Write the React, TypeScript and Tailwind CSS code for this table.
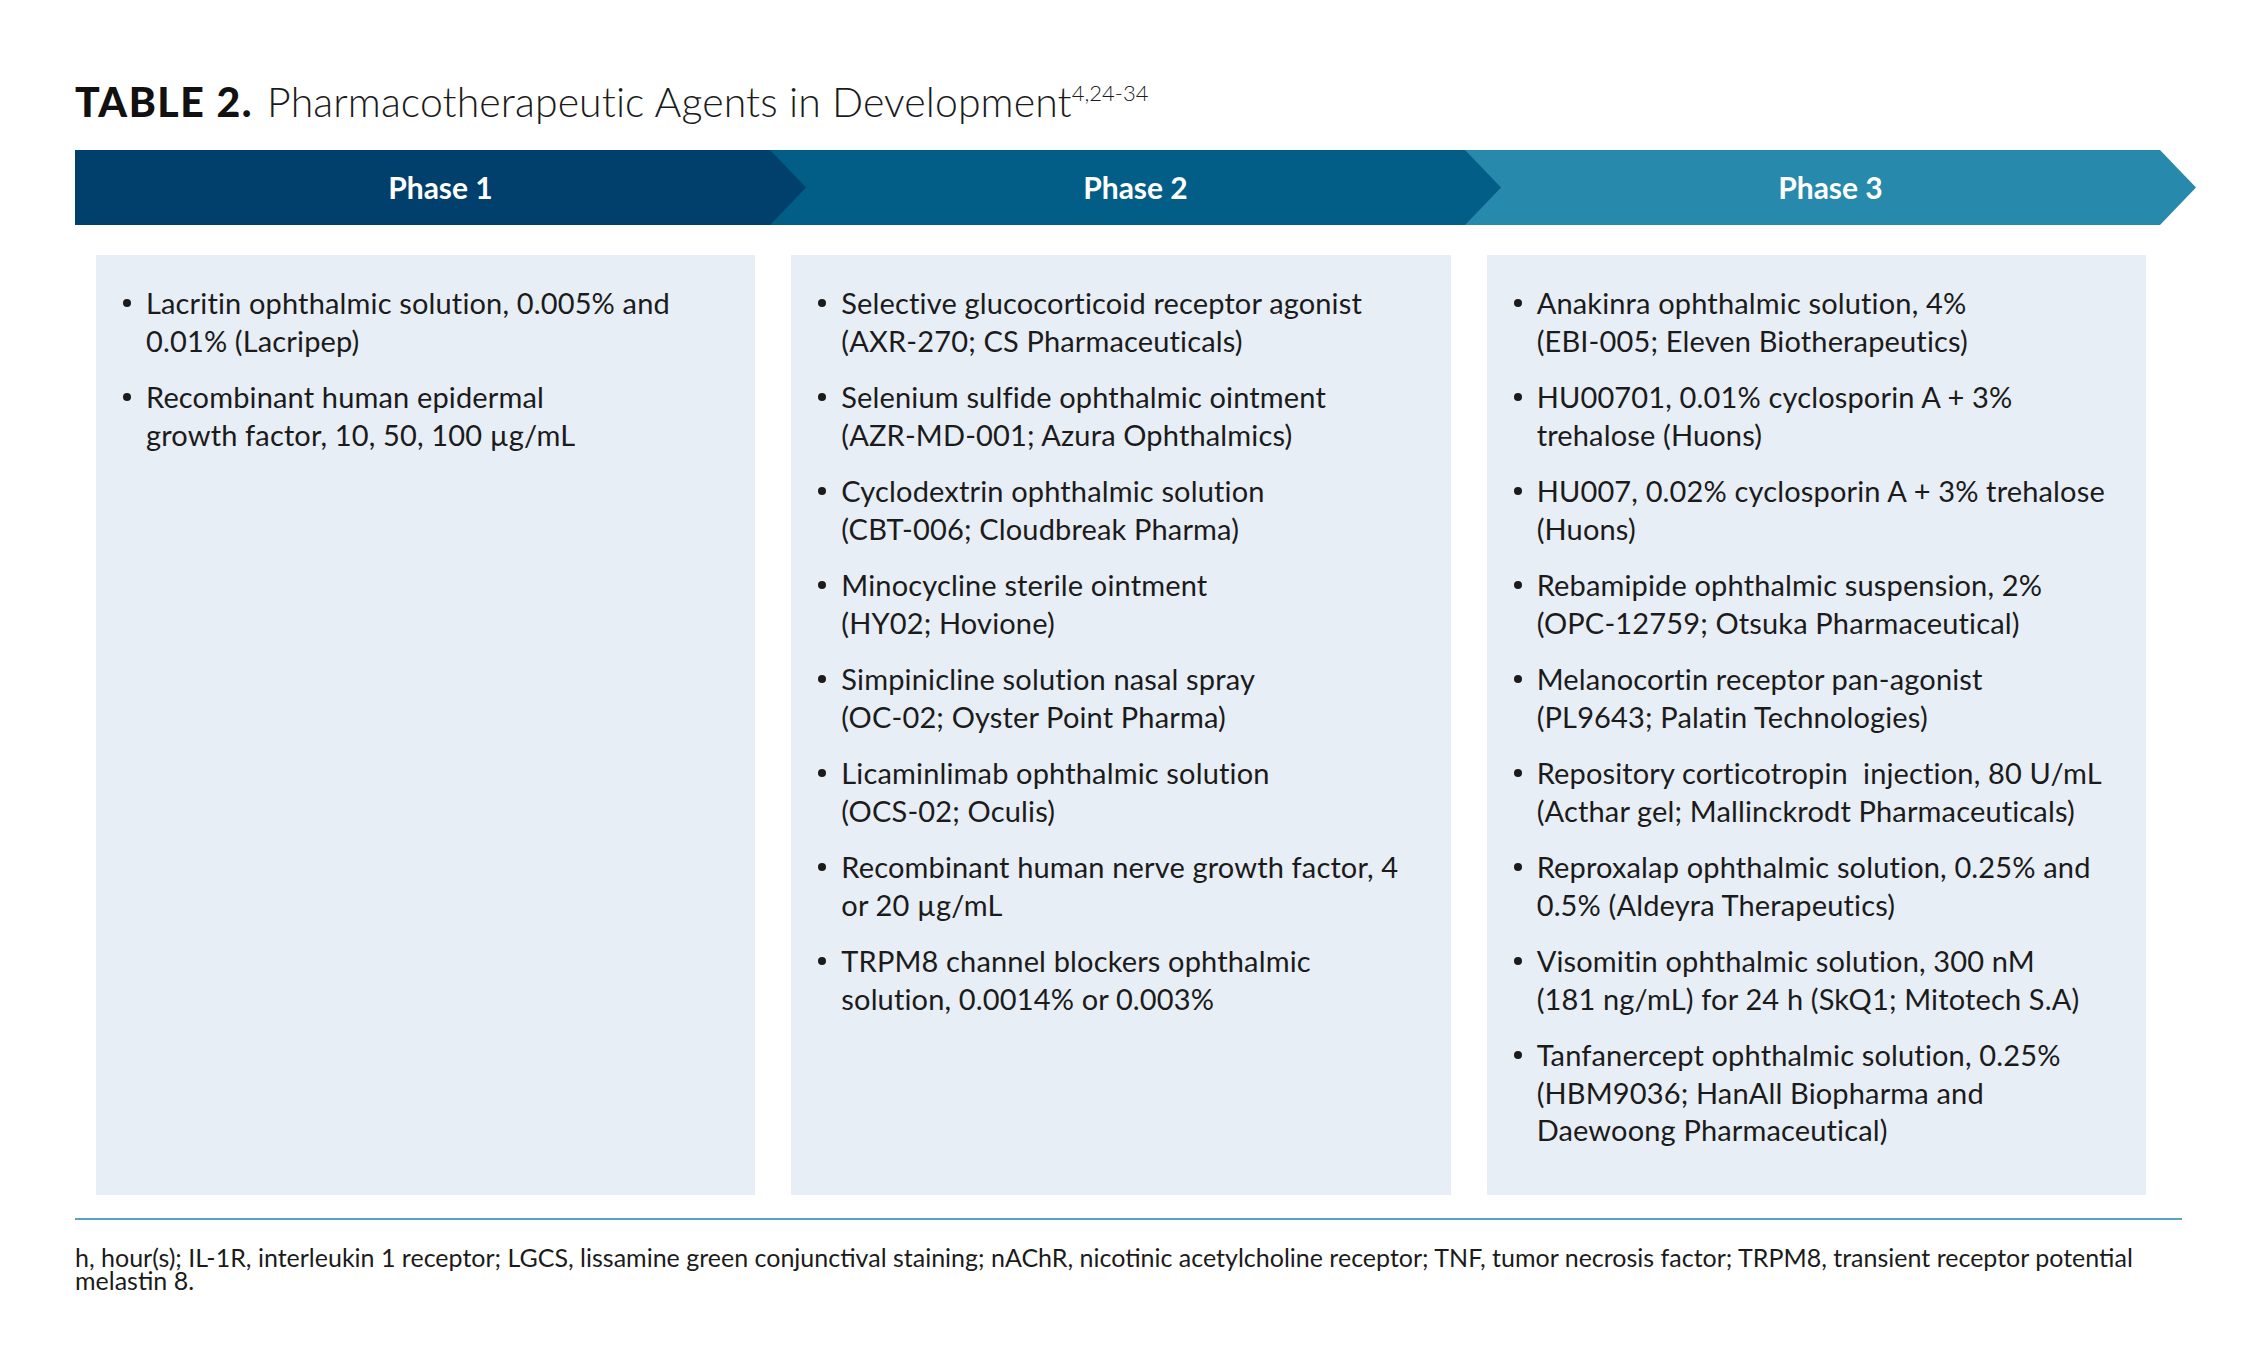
import React from 'react';

type Phase = {
  label: string;
  color: string;
  z: string;
  items: string[][];
};

const phases: Phase[] = [
  {
    label: 'Phase 1',
    color: 'bg-[#013f6d]',
    z: 'z-30',
    items: [
      ['Lacritin ophthalmic solution, 0.005% and', '0.01% (Lacripep)'],
      ['Recombinant human epidermal', 'growth factor, 10, 50, 100 µg/mL'],
    ],
  },
  {
    label: 'Phase 2',
    color: 'bg-[#025e87]',
    z: 'z-20',
    items: [
      ['Selective glucocorticoid receptor agonist', '(AXR-270; CS Pharmaceuticals)'],
      ['Selenium sulfide ophthalmic ointment', '(AZR-MD-001; Azura Ophthalmics)'],
      ['Cyclodextrin ophthalmic solution', '(CBT-006; Cloudbreak Pharma)'],
      ['Minocycline sterile ointment', '(HY02; Hovione)'],
      ['Simpinicline solution nasal spray', '(OC-02; Oyster Point Pharma)'],
      ['Licaminlimab ophthalmic solution', '(OCS-02; Oculis)'],
      ['Recombinant human nerve growth factor, 4', 'or 20 µg/mL'],
      ['TRPM8 channel blockers ophthalmic', 'solution, 0.0014% or 0.003%'],
    ],
  },
  {
    label: 'Phase 3',
    color: 'bg-[#2789ab]',
    z: 'z-10',
    items: [
      ['Anakinra ophthalmic solution, 4%', '(EBI-005; Eleven Biotherapeutics)'],
      ['HU00701, 0.01% cyclosporin A + 3%', 'trehalose (Huons)'],
      ['HU007, 0.02% cyclosporin A + 3% trehalose', '(Huons)'],
      ['Rebamipide ophthalmic suspension, 2%', '(OPC-12759; Otsuka Pharmaceutical)'],
      ['Melanocortin receptor pan-agonist', '(PL9643; Palatin Technologies)'],
      ['Repository corticotropin  injection, 80 U/mL', '(Acthar gel; Mallinckrodt Pharmaceuticals)'],
      ['Reproxalap ophthalmic solution, 0.25% and', '0.5% (Aldeyra Therapeutics)'],
      ['Visomitin ophthalmic solution, 300 nM', '(181 ng/mL) for 24 h (SkQ1; Mitotech S.A)'],
      ['Tanfanercept ophthalmic solution, 0.25%', '(HBM9036; HanAll Biopharma and', 'Daewoong Pharmaceutical)'],
    ],
  },
];

const font = { fontFamily: 'Lato, "Noto Sans", sans-serif' };

export default function App() {
  return (
    <div className="min-h-[1366px] w-[2257px] bg-white text-[#1b1b1b]" style={font}>
      <div className="pl-[75px] pt-[78px]">
        {/* Title */}
        <h1 className="flex items-baseline whitespace-nowrap text-[41px] leading-[48px]">
          <span className="font-black tracking-[1.5px] text-[#111]">TABLE 2.</span>
          <span className="ml-[14px] font-light tracking-[0.1px]">Pharmacotherapeutic Agents in Development</span>
          <sup className="relative -top-[16px] text-[22px] font-light">4,24-34</sup>
        </h1>

        {/* Phase arrow bar */}
        <div className="mt-[24px] flex h-[75px] w-[2122px]">
          {phases.map((p, i) => (
            <div
              key={p.label}
              className={`relative flex h-full w-[731px] items-center justify-center ${p.color} ${p.z} ${i > 0 ? '-ml-[36px]' : ''} [clip-path:polygon(0_0,calc(100%-36px)_0,100%_50%,calc(100%-36px)_100%,0_100%)]`}
            >
              <span className="text-[30px] font-bold text-white">{p.label}</span>
            </div>
          ))}
        </div>

        {/* Panels */}
        <div className="ml-[21px] mt-[30px] grid w-[2050px] grid-cols-3 gap-[36px]">
          {phases.map((p) => (
            <div key={p.label} className="h-[940px] bg-[#e7eef6] pl-[27px] pt-[29px]">
              <ul className="flex flex-col gap-[19px]">
                {p.items.map((lines, j) => (
                  <li key={j} className="flex text-[29px] leading-[37.5px] tracking-[0.15px]">
                    <span className="flex h-[37.5px] w-[23px] shrink-0 items-center">
                      <span className="h-[8px] w-[8px] rounded-full bg-[#1b1b1b]" />
                    </span>
                    <span className="flex flex-col whitespace-pre">
                      {lines.map((l) => (
                        <span key={l}>{l}</span>
                      ))}
                    </span>
                  </li>
                ))}
              </ul>
            </div>
          ))}
        </div>

        {/* Footnote */}
        <div className="mt-[23px] h-[2px] w-[2107px] bg-[#5aa2c6]" />
        <p className="mt-[26px] w-[2107px] text-[25px] leading-[23px] text-[#1b1b1b]">
          h, hour(s); IL-1R, interleukin 1 receptor; LGCS, lissamine green conjunctival staining; nAChR, nicotinic acetylcholine receptor; TNF, tumor necrosis factor; TRPM8, transient receptor potential melastin 8.
        </p>
      </div>
    </div>
  );
}
